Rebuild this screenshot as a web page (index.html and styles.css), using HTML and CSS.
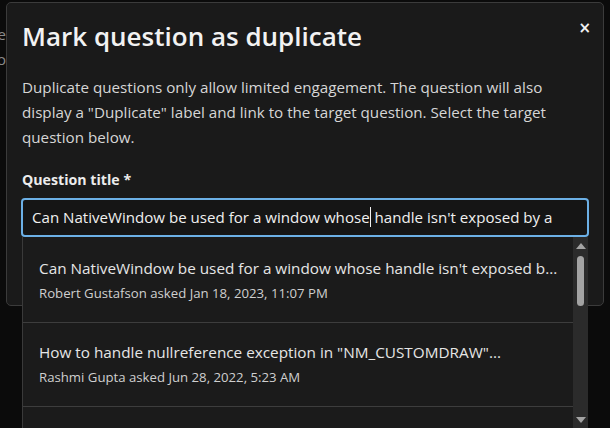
FILE: index.html
```html
<!DOCTYPE html>
<html lang="en">
<head>
    <meta charset="UTF-8">
    <meta name="viewport" content="width=device-width, initial-scale=1.0">
    <title>Mark question as duplicate</title>
    <link rel="stylesheet" href="styles.css">
</head>
<body>
    <div class="page">
        <div class="page-edge">
            <div class="edge-line">Some question here</div>
            <div class="edge-line">Another word to</div>
        </div>
    </div>

    <div class="dialog">
        <button class="close" aria-label="Close">&times;</button>
        <h1>Mark question as duplicate</h1>
        <p class="intro">Duplicate questions only allow limited engagement. The question will also display a "Duplicate" label and link to the target question. Select the target question below.</p>
        <label class="field-label">Question title *</label>
        <div class="combo">
            <div class="input">Can NativeWindow be used for a window whose<span class="caret"></span> handle isn't exposed by a</div>
            <div class="dropdown">
                <ul class="results">
                    <li>
                        <div class="result-title">Can NativeWindow be used for a window whose handle isn't exposed b...</div>
                        <div class="result-meta">Robert Gustafson asked Jan 18, 2023, 11:07 PM</div>
                    </li>
                    <li>
                        <div class="result-title">How to handle nullreference exception in "NM_CUSTOMDRAW"...</div>
                        <div class="result-meta">Rashmi Gupta asked Jun 28, 2022, 5:23 AM</div>
                    </li>
                </ul>
                <div class="scrollbar">
                    <span class="arrow up"></span>
                    <span class="thumb"></span>
                    <span class="arrow down"></span>
                </div>
            </div>
        </div>
    </div>
</body>
</html>
```

FILE: styles.css
```css
html, body {
    height: 100%;
}
body {
    margin: 0;
    background-color: #0b0b0b;
    font-family: "Open Sans", "Noto Sans", sans-serif;
    color: #d8d8d8;
    overflow: hidden;
    position: relative;
}
.page {
    padding-top: 22px;
}
.page-edge {
    width: 6px;
    overflow: hidden;
}
.edge-line {
    white-space: nowrap;
    font-size: 15px;
    line-height: 25px;
    color: #8a8a8a;
    float: right;
    clear: both;
}
.dialog {
    position: absolute;
    left: 6px;
    top: 2px;
    width: 566px;
    height: 290px;
    padding: 12px 15px 0 15px;
    background-color: #1a1a1a;
    border: 1px solid #3b3b3b;
    border-radius: 5px;
}
.close {
    position: absolute;
    right: 10px;
    top: 15px;
    background: none;
    border: none;
    color: #f2f2f2;
    font-size: 15px;
    font-weight: 700;
    line-height: 20px;
    padding: 0 2px;
    font-family: "DejaVu Sans", sans-serif;
}
h1 {
    margin: 0;
    font-size: 26px;
    font-weight: 600;
    line-height: 42px;
    color: #f2f2f2;
}
.intro {
    margin: 18px 0 20px;
    font-size: 15.2px;
    line-height: 25px;
    color: #d6d6d6;
}
.field-label {
    display: block;
    font-size: 14.2px;
    font-weight: 700;
    line-height: 20px;
    color: #ececec;
    margin-bottom: 8px;
}
.combo {
    position: relative;
}
.input {
    margin: 0 -1px;
    height: 35px;
    padding: 0 9px;
    border: 2px solid #6cb0e6;
    border-radius: 4px;
    background-color: #151515;
    font-size: 15.1px;
    line-height: 35px;
    color: #f0f0f0;
    white-space: nowrap;
    overflow: hidden;
}
.caret {
    display: inline-block;
    width: 1px;
    height: 20px;
    background-color: #f0f0f0;
    vertical-align: -4px;
}
.dropdown {
    position: absolute;
    left: 0;
    right: 0;
    top: 39px;
    height: 191px;
    display: flex;
    background-color: #1b1b1b;
    border-left: 1px solid #3a3a3a;
    z-index: 2;
    overflow: hidden;
}
.results {
    flex: 1;
    list-style: none;
    margin: 0;
    padding: 2px 0 0;
}
.results li {
    padding: 18px 16px;
    border-bottom: 1px solid #3d3d3d;
}
.result-title {
    font-size: 15.3px;
    line-height: 22px;
    color: #e6e6e6;
    white-space: nowrap;
    overflow: hidden;
}
.result-meta {
    margin-top: 3px;
    font-size: 13.2px;
    line-height: 22px;
    color: #cfcfcf;
}
.scrollbar {
    width: 15px;
    background-color: #2b2b2b;
    display: flex;
    flex-direction: column;
    align-items: center;
    padding-top: 6px;
}
.arrow {
    width: 0;
    height: 0;
    border-left: 5px solid transparent;
    border-right: 5px solid transparent;
}
.arrow.up {
    border-bottom: 6px solid #a3a3a3;
}
.arrow.down {
    border-top: 6px solid #a3a3a3;
    margin-top: 111px;
}
.thumb {
    width: 7px;
    height: 50px;
    margin-top: 7px;
    border-radius: 4px;
    background-color: #a3a3a3;
}
```
